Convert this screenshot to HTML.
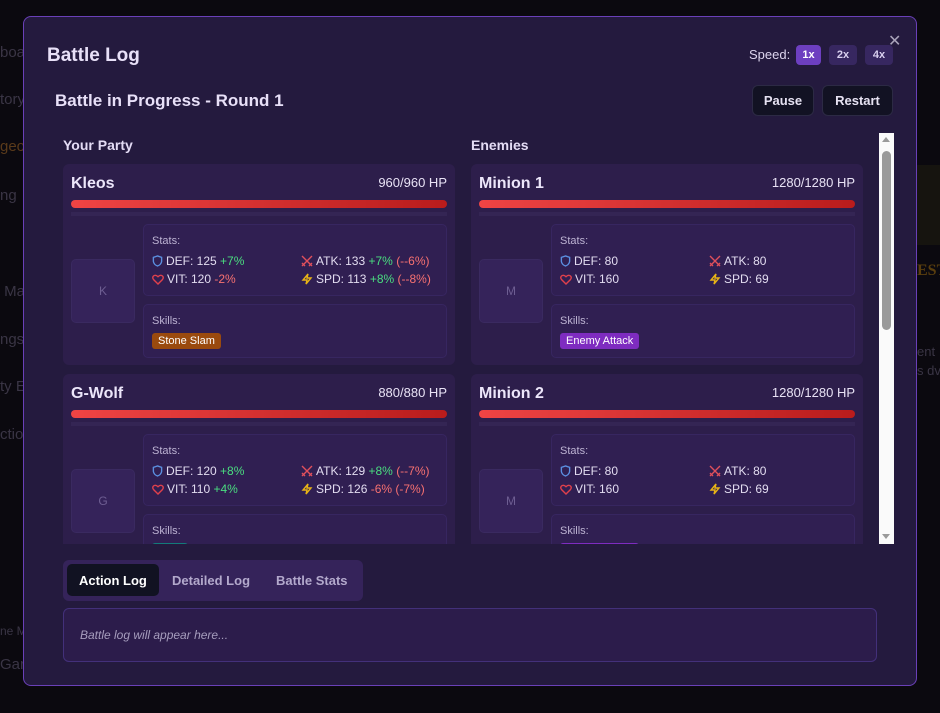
<!DOCTYPE html>
<html><head><meta charset="utf-8"><style>
*{box-sizing:border-box;margin:0;padding:0}
body{width:940px;height:713px;background:#0b090f;font-family:"Liberation Sans",sans-serif;position:relative;overflow:hidden;color:#e4dcf5}
.bgt{position:absolute;left:0;color:#3a3545;font-size:15px;white-space:nowrap}
.abs{position:absolute;white-space:nowrap}
#modal{position:absolute;left:23px;top:16px;width:894px;height:670px;background:#241a3e;border:1px solid #6a40b8;border-radius:8px}
.btn{position:absolute;background:#121223;border:1px solid #2c2a44;border-radius:6px;color:#e6e2f2;font-size:13px;font-weight:bold;text-align:center;line-height:29px}
.sp{position:absolute;top:28px;height:20px;border-radius:4px;background:#372760;color:#d9d0ef;font-size:11px;font-weight:bold;text-align:center;line-height:20px;width:25px}
.card{position:absolute;width:392px;height:201px;background:#2d1e4b;border-radius:6px}
.nm{position:absolute;left:8px;top:11px;font-size:16px;font-weight:bold;color:#ece6fa}
.hp{position:absolute;right:8px;top:11px;font-size:13px;color:#e8e2f5}
.bar{position:absolute;left:8px;right:8px;top:36px;height:8px;border-radius:4px;background:linear-gradient(90deg,#ef4444,#b91c1c)}
.trk{position:absolute;left:8px;right:8px;top:48px;height:4px;background:#342554}
.av{position:absolute;left:8px;top:95px;width:64px;height:64px;background:#35235a;border:1px solid #3a2a60;border-radius:5px;color:#6e5e92;font-size:12px;text-align:center;line-height:62px}
.box{position:absolute;left:80px;right:8px;background:#301f52;border:1px solid #372660;border-radius:5px}
.st{top:60px;height:72px}
.sk{top:140px;height:54px}
.lbl{position:absolute;left:8px;top:10px;font-size:11px;color:#bdb3d3}
.row{position:absolute;font-size:12px;color:#e2dcf0;white-space:nowrap}
.row svg{vertical-align:-2px;margin-right:3px}
.g{color:#4ade80}.r{color:#f87171}
.tag{position:absolute;left:8px;top:28px;height:16px;border-radius:3px;font-size:11px;line-height:16px;padding:0 6px;color:#fff}
</style></head><body>
<div class="bgt" style="top:44px">boa</div>
<div class="bgt" style="top:91px">tory</div>
<div class="bgt" style="top:138px;color:#5a3a1a">geon</div>
<div class="bgt" style="top:187px">ng</div>
<div class="bgt" style="top:283px">&nbsp;Ma</div>
<div class="bgt" style="top:331px">ngs</div>
<div class="bgt" style="top:378px">ty E</div>
<div class="bgt" style="top:426px">ctio</div>
<div class="bgt" style="top:624px;font-size:12px">ne M</div>
<div class="bgt" style="top:656px">Gar</div>
<div class="abs" style="left:917px;top:165px;width:23px;height:80px;background:#16140f"></div>
<div class="abs" style="left:917px;top:262px;color:#5a3e0e;font-family:'Liberation Serif';font-weight:bold;font-size:16px">EST</div>
<div class="abs" style="left:917px;top:344px;color:#3a3545;font-size:13px">ent</div>
<div class="abs" style="left:917px;top:363px;color:#3a3545;font-size:13px">s dv</div>

<div id="modal">
<div class="abs" style="left:23px;top:28px;font-size:19px;font-weight:bold;color:#e8e0f8">Battle Log</div>
<div class="abs" style="left:864px;top:14px;color:#a9a3ba;font-size:16px">✕</div>
<div class="abs" style="left:725px;top:30px;font-size:13px;color:#ddd5ee">Speed:</div>
<div class="sp" style="left:772px;background:#6d3fc0;color:#fff">1x</div>
<div class="sp" style="left:805px;width:28px">2x</div>
<div class="sp" style="left:841px;width:28px">4x</div>
<div class="abs" style="left:31px;top:74px;font-size:17px;font-weight:bold;color:#e8e0f8">Battle in Progress - Round 1</div>
<div class="btn" style="left:728px;top:68px;width:62px;height:31px">Pause</div>
<div class="btn" style="left:798px;top:68px;width:71px;height:31px">Restart</div>

<div class="abs" style="left:31px;top:115px;width:839px;height:412px;overflow:hidden">
 <div class="abs" style="left:8px;top:5px;font-size:14px;font-weight:bold;color:#e4dcf5">Your Party</div>
 <div class="abs" style="left:416px;top:5px;font-size:14px;font-weight:bold;color:#e4dcf5">Enemies</div>
 <div class="card" style="left:8px;top:32px">
  <div class="nm">Kleos</div><div class="hp">960/960 HP</div><div class="bar"></div><div class="trk"></div>
  <div class="av">K</div>
  <div class="box st"><div class="lbl">Stats:</div>
   <div class="row" style="left:8px;top:29px"><svg width="11" height="12" viewBox="0 0 12 13"><path d="M6 1L10.5 2.5V7Q10 10.5 6 12Q2 10.5 1.5 7V2.5Z" fill="none" stroke="#5b8fe0" stroke-width="1.5"/></svg>DEF: 125 <span class="g">+7%</span></div>
   <div class="row" style="left:8px;top:47px"><svg width="12" height="11" viewBox="0 0 12 11"><path d="M6 10L1.5 5.5Q0 3.5 1.5 2Q3.5 0.3 6 2.7Q8.5 0.3 10.5 2Q12 3.5 10.5 5.5Z" fill="none" stroke="#e0404c" stroke-width="1.4"/></svg>VIT: 120 <span class="r">-2%</span></div>
   <div class="row" style="left:157px;top:29px"><svg width="12" height="12" viewBox="0 0 12 12"><path d="M1 1L11 11M11 1L1 11M1 8L4 11M8 11L11 8" stroke="#e0505c" stroke-width="1.4"/></svg>ATK: 133 <span class="g">+7%</span> <span class="r">(--6%)</span></div>
   <div class="row" style="left:157px;top:47px"><svg width="12" height="12" viewBox="0 0 12 12"><path d="M7 1L2 7H6L5 11L10 5H6Z" fill="none" stroke="#e8b416" stroke-width="1.4"/></svg>SPD: 113 <span class="g">+8%</span> <span class="r">(--8%)</span></div>
  </div>
  <div class="box sk"><div class="lbl">Skills:</div><div class="tag" style="background:#9a4a0e">Stone Slam</div></div>
 </div>
 <div class="card" style="left:8px;top:242px">
  <div class="nm">G-Wolf</div><div class="hp">880/880 HP</div><div class="bar"></div><div class="trk"></div>
  <div class="av">G</div>
  <div class="box st"><div class="lbl">Stats:</div>
   <div class="row" style="left:8px;top:29px"><svg width="11" height="12" viewBox="0 0 12 13"><path d="M6 1L10.5 2.5V7Q10 10.5 6 12Q2 10.5 1.5 7V2.5Z" fill="none" stroke="#5b8fe0" stroke-width="1.5"/></svg>DEF: 120 <span class="g">+8%</span></div>
   <div class="row" style="left:8px;top:47px"><svg width="12" height="11" viewBox="0 0 12 11"><path d="M6 10L1.5 5.5Q0 3.5 1.5 2Q3.5 0.3 6 2.7Q8.5 0.3 10.5 2Q12 3.5 10.5 5.5Z" fill="none" stroke="#e0404c" stroke-width="1.4"/></svg>VIT: 110 <span class="g">+4%</span></div>
   <div class="row" style="left:157px;top:29px"><svg width="12" height="12" viewBox="0 0 12 12"><path d="M1 1L11 11M11 1L1 11M1 8L4 11M8 11L11 8" stroke="#e0505c" stroke-width="1.4"/></svg>ATK: 129 <span class="g">+8%</span> <span class="r">(--7%)</span></div>
   <div class="row" style="left:157px;top:47px"><svg width="12" height="12" viewBox="0 0 12 12"><path d="M7 1L2 7H6L5 11L10 5H6Z" fill="none" stroke="#e8b416" stroke-width="1.4"/></svg>SPD: 126 <span class="r">-6%</span> <span class="r">(-7%)</span></div>
  </div>
  <div class="box sk"><div class="lbl">Skills:</div><div class="tag" style="background:#137a7a">Howl</div></div>
 </div>
 <div class="card" style="left:416px;top:32px">
  <div class="nm">Minion 1</div><div class="hp">1280/1280 HP</div><div class="bar"></div><div class="trk"></div>
  <div class="av">M</div>
  <div class="box st"><div class="lbl">Stats:</div>
   <div class="row" style="left:8px;top:29px"><svg width="11" height="12" viewBox="0 0 12 13"><path d="M6 1L10.5 2.5V7Q10 10.5 6 12Q2 10.5 1.5 7V2.5Z" fill="none" stroke="#5b8fe0" stroke-width="1.5"/></svg>DEF: 80</div>
   <div class="row" style="left:8px;top:47px"><svg width="12" height="11" viewBox="0 0 12 11"><path d="M6 10L1.5 5.5Q0 3.5 1.5 2Q3.5 0.3 6 2.7Q8.5 0.3 10.5 2Q12 3.5 10.5 5.5Z" fill="none" stroke="#e0404c" stroke-width="1.4"/></svg>VIT: 160</div>
   <div class="row" style="left:157px;top:29px"><svg width="12" height="12" viewBox="0 0 12 12"><path d="M1 1L11 11M11 1L1 11M1 8L4 11M8 11L11 8" stroke="#e0505c" stroke-width="1.4"/></svg>ATK: 80</div>
   <div class="row" style="left:157px;top:47px"><svg width="12" height="12" viewBox="0 0 12 12"><path d="M7 1L2 7H6L5 11L10 5H6Z" fill="none" stroke="#e8b416" stroke-width="1.4"/></svg>SPD: 69</div>
  </div>
  <div class="box sk"><div class="lbl">Skills:</div><div class="tag" style="background:#7e2cc0">Enemy Attack</div></div>
 </div>
 <div class="card" style="left:416px;top:242px">
  <div class="nm">Minion 2</div><div class="hp">1280/1280 HP</div><div class="bar"></div><div class="trk"></div>
  <div class="av">M</div>
  <div class="box st"><div class="lbl">Stats:</div>
   <div class="row" style="left:8px;top:29px"><svg width="11" height="12" viewBox="0 0 12 13"><path d="M6 1L10.5 2.5V7Q10 10.5 6 12Q2 10.5 1.5 7V2.5Z" fill="none" stroke="#5b8fe0" stroke-width="1.5"/></svg>DEF: 80</div>
   <div class="row" style="left:8px;top:47px"><svg width="12" height="11" viewBox="0 0 12 11"><path d="M6 10L1.5 5.5Q0 3.5 1.5 2Q3.5 0.3 6 2.7Q8.5 0.3 10.5 2Q12 3.5 10.5 5.5Z" fill="none" stroke="#e0404c" stroke-width="1.4"/></svg>VIT: 160</div>
   <div class="row" style="left:157px;top:29px"><svg width="12" height="12" viewBox="0 0 12 12"><path d="M1 1L11 11M11 1L1 11M1 8L4 11M8 11L11 8" stroke="#e0505c" stroke-width="1.4"/></svg>ATK: 80</div>
   <div class="row" style="left:157px;top:47px"><svg width="12" height="12" viewBox="0 0 12 12"><path d="M7 1L2 7H6L5 11L10 5H6Z" fill="none" stroke="#e8b416" stroke-width="1.4"/></svg>SPD: 69</div>
  </div>
  <div class="box sk"><div class="lbl">Skills:</div><div class="tag" style="background:#7e2cc0">Enemy Attack</div></div>
 </div>
 <div class="abs" style="left:824px;top:1px;width:15px;height:411px;background:#fafafa">
  <div class="abs" style="left:3px;top:4px;width:0;height:0;border-left:4px solid transparent;border-right:4px solid transparent;border-bottom:5px solid #9a9a9a"></div>
  <div class="abs" style="left:3px;top:18px;width:9px;height:179px;border-radius:5px;background:#9a9a9a"></div>
  <div class="abs" style="left:3px;top:401px;width:0;height:0;border-left:4px solid transparent;border-right:4px solid transparent;border-top:5px solid #9a9a9a"></div>
 </div>
</div>

<div class="abs" style="left:39px;top:543px;width:300px;height:41px;background:#35235a;border-radius:6px">
 <div class="abs" style="left:4px;top:4px;width:92px;height:32px;background:#111222;border-radius:5px"></div>
 <div class="abs" style="left:16px;top:13px;font-size:13px;font-weight:bold;color:#fff">Action Log</div>
 <div class="abs" style="left:109px;top:13px;font-size:13px;font-weight:bold;color:#b3a9cc">Detailed Log</div>
 <div class="abs" style="left:213px;top:13px;font-size:13px;font-weight:bold;color:#b3a9cc">Battle Stats</div>
</div>
<div class="abs" style="left:39px;top:591px;width:814px;height:54px;background:#2c1c4b;border:1px solid #43307a;border-radius:6px">
 <div class="abs" style="left:16px;top:19px;font-size:12px;font-style:italic;color:#a69dbd">Battle log will appear here...</div>
</div>
</div>
</body></html>
